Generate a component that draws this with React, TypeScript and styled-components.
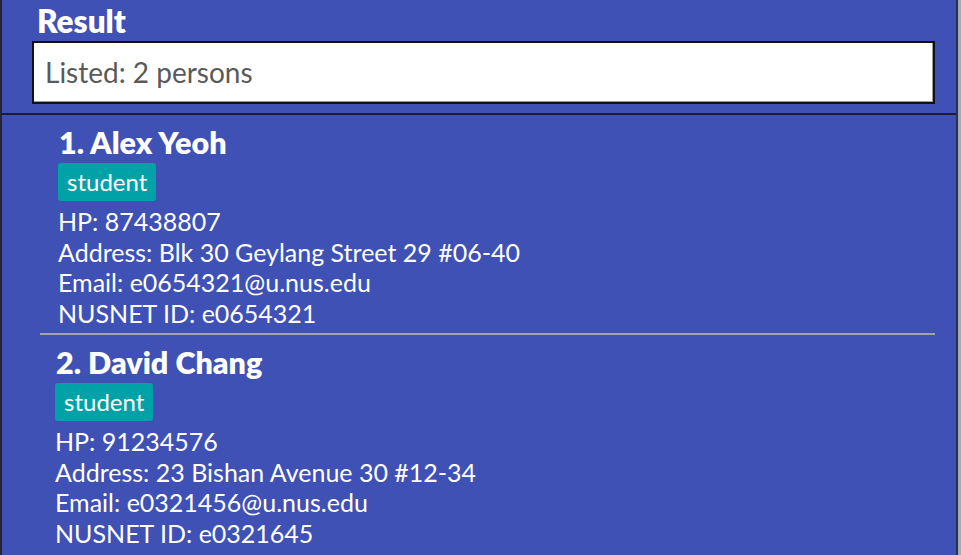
import React from "react";
import styled, { createGlobalStyle } from "styled-components";

const Global = createGlobalStyle`
  html, body { margin: 0; padding: 0; background: #3f51b5; }
  body { font-family: Lato, "Noto Sans", sans-serif; overflow: hidden; }
`;

const Frame = styled.div`
  width: 961px;
  height: 555px;
  box-sizing: border-box;
  border-right: 3px solid #a9a9b0;
  overflow: hidden;
`;

const Inner = styled.div`
  height: 100%;
  box-sizing: border-box;
  border-left: 2px solid #25253a;
  border-right: 2px solid #2a2f55;
  background: #3f51b5;
  display: flex;
  flex-direction: column;
`;

const ResultPane = styled.section`
  padding: 5px 21px 9px 30px;
  border-bottom: 2px solid #1b1d2c;
  display: flex;
  flex-direction: column;
  gap: 3px;
`;

const Title = styled.h2`
  margin: 0 0 0 5px;
  font-size: 31.5px;
  line-height: 33px;
  font-weight: 800;
  color: #ffffff;
`;

const ResultBox = styled.div`
  height: 63px;
  box-sizing: border-box;
  background: #ffffff;
  border: 2px solid #111111;
  box-shadow: inset -1px -1px 0 #9a9a9a;
  display: flex;
  align-items: center;
  padding: 0 10px 2px 11px;
  font-size: 28px;
  color: #5a5a5a;
`;

const List = styled.div`
  display: flex;
  flex-direction: column;
  padding: 0 21px 0 38px;
`;

const Card = styled.article<{ $inset: number }>`
  padding: 10px 0 0 ${(p) => p.$inset}px;
  height: 220px;
  box-sizing: border-box;
  border-bottom: 2px solid #a2a2aa;
  display: flex;
  flex-direction: column;
  align-items: flex-start;
  &:last-child { border-bottom: none; }
`;

const Name = styled.div`
  font-size: 30.5px;
  font-weight: 800;
  line-height: 34px;
  color: #ffffff;
  margin-left: 1px;
`;

const Tag = styled.span`
  margin-top: 4px;
  margin-bottom: 5px;
  height: 38px;
  box-sizing: border-box;
  display: inline-flex;
  align-items: center;
  padding: 0 9px 2px 9px;
  background: #00a2a8;
  border-radius: 3px;
  color: #ffffff;
  font-size: 24px;
`;

const Detail = styled.div`
  font-size: 25px;
  line-height: 30.5px;
  color: #ffffff;
`;

type Person = {
  name: string;
  tag: string;
  phone: string;
  address: string;
  email: string;
  nusnet: string;
  inset: number;
};

const people: Person[] = [
  {
    name: "1. Alex Yeoh",
    tag: "student",
    phone: "87438807",
    address: "Blk 30 Geylang Street 29 #06-40",
    email: "e0654321@u.nus.edu",
    nusnet: "e0654321",
    inset: 18,
  },
  {
    name: "2. David Chang",
    tag: "student",
    phone: "91234576",
    address: "23 Bishan Avenue 30 #12-34",
    email: "e0321456@u.nus.edu",
    nusnet: "e0321645",
    inset: 15,
  },
];

export default function App() {
  return (
    <>
      <Global />
      <Frame>
        <Inner>
          <ResultPane>
            <Title>Result</Title>
            <ResultBox>Listed: 2 persons</ResultBox>
          </ResultPane>
          <List>
            {people.map((p) => (
              <Card key={p.name} $inset={p.inset}>
                <Name>{p.name}</Name>
                <Tag>{p.tag}</Tag>
                <Detail>HP: {p.phone}</Detail>
                <Detail>Address: {p.address}</Detail>
                <Detail>Email: {p.email}</Detail>
                <Detail>NUSNET ID: {p.nusnet}</Detail>
              </Card>
            ))}
          </List>
        </Inner>
      </Frame>
    </>
  );
}
